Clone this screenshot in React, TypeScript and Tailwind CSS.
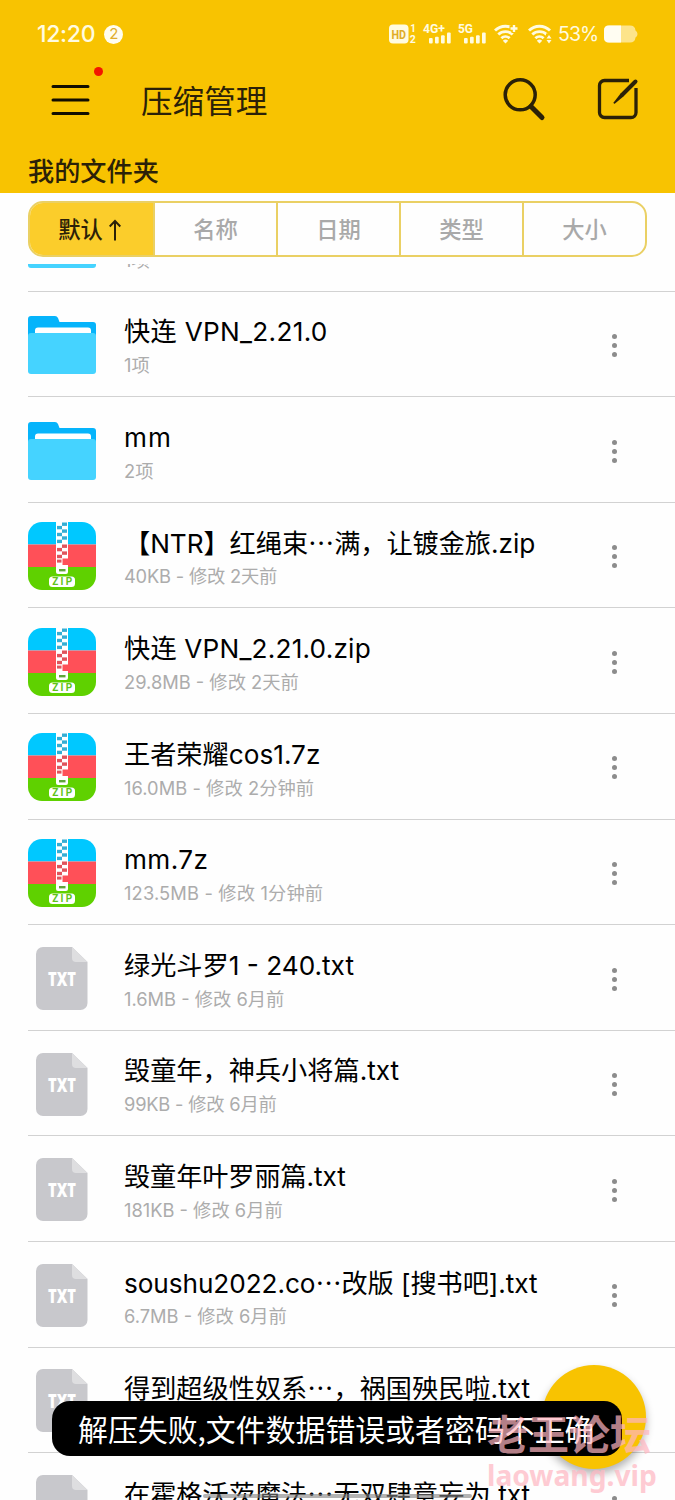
import React from "react";

type FileKind = "folder" | "zip" | "txt";

interface FileItem {
  kind: FileKind;
  name: string;
  info: string;
  nameClass?: string;
  infoClass?: string;
}

const files: FileItem[] = [
  { kind: "folder", name: "", info: "1项" },
  { kind: "folder", name: "快连 VPN_2.21.0", info: "1项", nameClass: "tracking-[0.3px]" },
  { kind: "folder", name: "mm", info: "2项", nameClass: "tracking-[1px]" },
  {
    kind: "zip",
    name: "【NTR】红绳束…满，让镀金旅.zip",
    info: "40KB - 修改 2天前",
    nameClass: "tracking-[-0.05px]",
    infoClass: "tracking-[-0.2px]",
  },
  { kind: "zip", name: "快连 VPN_2.21.0.zip", info: "29.8MB - 修改 2天前", nameClass: "tracking-[0.2px]" },
  { kind: "zip", name: "王者荣耀cos1.7z", info: "16.0MB - 修改 2分钟前", infoClass: "tracking-[0.05px]" },
  {
    kind: "zip",
    name: "mm.7z",
    info: "123.5MB - 修改 1分钟前",
    nameClass: "tracking-[0.4px]",
    infoClass: "tracking-[0.15px]",
  },
  { kind: "txt", name: "绿光斗罗1 - 240.txt", info: "1.6MB - 修改 6月前" },
  { kind: "txt", name: "毁童年，神兵小将篇.txt", info: "99KB - 修改 6月前", infoClass: "tracking-[-0.2px]" },
  { kind: "txt", name: "毁童年叶罗丽篇.txt", info: "181KB - 修改 6月前", nameClass: "tracking-[-0.1px]" },
  { kind: "txt", name: "soushu2022.co…改版 [搜书吧].txt", info: "6.7MB - 修改 6月前", nameClass: "tracking-[-0.08px]" },
  { kind: "txt", name: "得到超级性奴系…，祸国殃民啦.txt", info: "" },
  { kind: "txt", name: "在霍格沃茨魔法…无双肆意妄为.txt", info: "" },
];

const tabs = ["默认", "名称", "日期", "类型", "大小"];

const FolderIcon = () => (
  <svg width="68" height="58" viewBox="0 0 68 58">
    <path d="M0 3a3 3 0 0 1 3-3h24q2 0 3 2l1.500 4H65a3 3 0 0 1 3 3v20H0z" fill="#06b4fb" />
    <path d="M7 18v-3.500a3 3 0 0 1 3-3h50a3 3 0 0 1 3 3V18z" fill="#fff" />
    <path d="M0 20a3 3 0 0 1 3-3h62a3 3 0 0 1 3 3v35a3 3 0 0 1-3 3H3a3 3 0 0 1-3-3z" fill="#45d3ff" />
  </svg>
);

const ZipIcon = () => (
  <svg width="68" height="68" viewBox="0 0 68 68">
    <path d="M0 22.500V14A14 14 0 0 1 14 0h40a14 14 0 0 1 14 14v8.500z" fill="#00c8ff" />
    <path d="M0 22.500h68V45H0z" fill="#ff5058" />
    <path d="M0 45h68v9a14 14 0 0 1-14 14H14A14 14 0 0 1 0 54z" fill="#5fd100" />
    <path d="M28 0h12v46h-12z" fill="#fff" />
    {[0.5, 7.4, 14.3].map((y) => (
      <g key={y} fill="#35aed4">
        <rect x="34" y={y} width="5" height="3.400" />
        <rect x="29" y={y + 3.4} width="5" height="3.400" />
      </g>
    ))}
    {[22.5, 29.4].map((y) => (
      <g key={y} fill="#e0545c">
        <rect x="34" y={y} width="5" height="3.400" />
        <rect x="29" y={y + 3.4} width="5" height="3.400" />
      </g>
    ))}
    <rect x="29" y="37.600" width="4.500" height="3" fill="#e0545c" />
    <rect x="34.500" y="36.500" width="5.500" height="7" fill="#ff5058" />
    <path d="M28 43h12v7a2 2 0 0 1-2 2h-8a2 2 0 0 1-2-2z" fill="#fff" />
    <rect x="31" y="47" width="6.500" height="2.400" fill="#5fa63a" />
    <rect x="21" y="54.500" width="26" height="10.500" rx="3.500" fill="#fff" />
    <text
      x="24.200"
      y="63.300"
      textLength="20"
      fontSize="10"
      fontWeight="700"
      fontFamily="Roboto, sans-serif"
      fill="#5fc31a"
    >
      ZIP
    </text>
  </svg>
);

const TxtIcon = () => (
  <svg width="68" height="63" viewBox="0 0 68 63">
    <path d="M15 0h29l15.500 15v41a7 7 0 0 1-7 7H15a7 7 0 0 1-7-7V7a7 7 0 0 1 7-7z" fill="#c8c8cc" />
    <path d="M44 0l15.500 15H48a4 4 0 0 1-4-4z" fill="#dedee0" />
    <text
      x="20"
      y="38.800"
      textLength="28"
      lengthAdjust="spacingAndGlyphs"
      fontSize="20"
      fontWeight="800"
      fontFamily="'Open Sans', sans-serif"
      fill="#fff"
    >
      TXT
    </text>
  </svg>
);

const icons: Record<FileKind, React.FC> = {
  folder: FolderIcon,
  zip: ZipIcon,
  txt: TxtIcon,
};

const SignalIcon = ({ label }: { label: string }) => (
  <svg className="overflow-visible" width="30" height="20" viewBox="0 0 30 20" fill="#fffbe0">
    <text
      x="0"
      y="9.300"
      fontSize="12"
      fontWeight="700"
      fontFamily="Roboto, sans-serif"
      textLength={label.length > 2 ? 22 : 15}
      lengthAdjust="spacingAndGlyphs"
    >
      {label}
    </text>
    <rect x="6" y="14" width="3.700" height="5.500" rx="1" />
    <rect x="12" y="12.800" width="3.700" height="6.700" rx="1" />
    <rect x="18" y="11.200" width="3.700" height="8.300" rx="1" />
    <rect x="24" y="8.500" width="3.700" height="11" rx="1" />
  </svg>
);

const WifiIcon = ({ plus }: { plus?: boolean }) => (
  <svg width="25" height="20" viewBox="0 0 25 20" fill="none" stroke="#fffbe0" strokeWidth="2.900">
    <path d="M1 6.500a15 15 0 0 1 21 0" />
    <path d="M4.300 10.500a10.500 10.500 0 0 1 14.400 0" />
    <path d="M7.400 14.200a6 6 0 0 1 8.200 0" />
    <path d="M8.800 16.800a3.800 3.800 0 0 1 5.400 0L11.500 19.500z" fill="#fffbe0" stroke="none" />
    {plus ? (
      <path d="M20 0v9M15.500 4.500h9" stroke="#f8c301" strokeWidth="5" />
    ) : (
      <path d="M21 9.500v10" stroke="#f8c301" strokeWidth="6" />
    )}
    {plus ? (
      <path d="M20 1v7M16.500 4.500h7" strokeWidth="2.400" />
    ) : (
      <path d="M21 11l2.500 3.400h-5zM21 19.500l-2.500-3.400h5z" fill="#fffbe0" stroke="none" />
    )}
  </svg>
);

const StatusBar = () => (
  <div className="flex h-[68px] items-center pl-[37px] pr-[37px] text-[#fffbe0]">
    <span className="text-[23px] font-medium tracking-[-0.3px]">12:20</span>
    <span className="ml-[9px] flex size-[19px] items-center justify-center rounded-full bg-[#fffdf0] text-[15px] text-[#e0ad2c]">
      2
    </span>
    <div className="ml-auto flex items-center">
      <svg className="overflow-visible" width="28" height="20" viewBox="0 0 28 20" fill="#fffbe0">
        <rect x="0" y="0.500" width="19.500" height="19" rx="4" />
        <text
          x="2.500"
          y="14.500"
          textLength="14.500"
          lengthAdjust="spacingAndGlyphs"
          fontSize="12.500"
          fontWeight="700"
          fontFamily="Roboto, sans-serif"
          fill="#dfac28"
        >
          HD
        </text>
        <text x="21.300" y="8" fontSize="10" fontWeight="700" fontFamily="Roboto, sans-serif">
          1
        </text>
        <text x="20.800" y="19.300" fontSize="10.500" fontWeight="700" fontFamily="Roboto, sans-serif">
          2
        </text>
      </svg>
      <div className="ml-[6px] flex">
        <SignalIcon label="4G+" />
      </div>
      <div className="ml-[5px] flex">
        <SignalIcon label="5G" />
      </div>
      <div className="ml-[6px] flex">
        <WifiIcon plus />
      </div>
      <div className="ml-[9px] flex">
        <WifiIcon />
      </div>
      <span className="ml-[5px] mt-[2px] w-[39px] text-[19.5px] tracking-[-0.9px]">53%</span>
      <svg className="ml-[7px]" width="34" height="18" viewBox="0 0 34 18">
        <path d="M5 .5h21q5 0 5.500 5 2 1 2 3.500t-2 3.500q-.5 5-5.500 5H5q-5 0-5-5v-7q0-5 5-5z" fill="#fde48a" />
        <path d="M5 .5h12v17H5q-5 0-5-5v-7q0-5 5-5z" fill="#fffdf2" />
      </svg>
    </div>
  </div>
);

const Header = () => (
  <header className="h-[193px] shrink-0 bg-[#f8c301] text-[#2b2108]">
    <StatusBar />
    <div className="flex h-[66px] items-center pl-[51px] pr-[35px]">
      <div className="relative -mt-[3px]">
        <svg width="39" height="34" viewBox="0 0 39 34" stroke="#120d00" strokeWidth="3" strokeLinecap="round">
          <path d="M2 3.500h35M2 17h35M2 30.500h35" />
        </svg>
        <span className="absolute -top-[16px] left-[43px] size-[9px] rounded-full bg-[#f21500]" />
      </div>
      <h1 className="ml-[51px] mt-[2px] text-[31.6px] leading-none">压缩管理</h1>
      <svg className="-mt-[2px] ml-auto" width="46" height="46" viewBox="0 0 46 46" fill="none" stroke="#2b2108">
        <circle cx="19.200" cy="17.800" r="15" strokeWidth="3.500" />
        <path d="M30 29.500L41 40.500" strokeWidth="5" strokeLinecap="round" />
      </svg>
      <svg
        className="-mt-[4px] ml-[49px]"
        width="44"
        height="44"
        viewBox="0 0 44 44"
        fill="none"
        stroke="#2b2108"
        strokeWidth="3.300"
      >
        <path d="M33 3.500H8.500a5 5 0 0 0-5 5v27a5 5 0 0 0 5 5H35a5 5 0 0 0 5-5V11" />
        <path d="M39.500 4.500L26 18" strokeWidth="4" strokeLinecap="round" />
        <path d="M24.600 16.600l2.800 2.800L19 26.500q-1.800.700-1.200-1.200z" fill="#2b2108" stroke="none" />
      </svg>
    </div>
    <h2 className="pl-[28px] pt-[24px] text-[26.2px] font-medium leading-[28px]">我的文件夹</h2>
  </header>
);

const SortTabs = () => (
  <div className="mx-[28px] mt-[8px] grid h-[56px] w-[619px] shrink-0 grid-cols-5 overflow-hidden rounded-[15px] border-2 border-[#ead064] text-[22.3px] font-medium text-[#a9a9a9]">
    {tabs.map((tab, index) => (
      <button
        key={tab}
        className={
          index === 0
            ? "flex items-center justify-center bg-[#fbcd2b] pr-[4px] pt-[2px] text-[#2b2108]"
            : "flex items-center justify-center border-l-2 border-[#ead064] pt-[2px]"
        }
      >
        {tab}
        {index === 0 && (
          <svg
            className="ml-[6px]"
            width="12"
            height="22"
            viewBox="0 0 12 22"
            fill="none"
            stroke="#2b2108"
            strokeWidth="2"
          >
            <path d="M6 21.500V2M.700 7.500L6 2l5.300 5.500" />
          </svg>
        )}
      </button>
    ))}
  </div>
);

const FileRow = ({ item }: { item: FileItem }) => {
  const Icon = icons[item.kind];
  // the ellipsis sits at mid height only in the CJK face
  const [head, tail] = item.name.split("…");
  return (
    <div className="ml-[28px] flex h-[105.6px] items-center border-b border-[#d2d2d2]">
      <div className="mt-[2px]">
        <Icon />
      </div>
      <div className="ml-[28px] flex h-full flex-1 flex-col pt-[23.5px]">
        <span className={`h-[33px] whitespace-nowrap text-[26.2px] leading-[33px] text-black ${item.nameClass ?? ""}`}>
          {head}
          {tail !== undefined && <span className="font-['Noto_Sans_CJK_SC']">…</span>}
          {tail}
        </span>
        <span
          className={`mt-[5px] whitespace-nowrap text-[18.3px] leading-[24px] text-[#acacac] ${item.infoClass ?? ""}`}
        >
          {item.info}
        </span>
      </div>
      <div className="mr-[58px] mt-[3px] flex w-[5px] flex-col gap-[4px]">
        <i className="size-[5px] rounded-full bg-[#8c8c8c]" />
        <i className="size-[5px] rounded-full bg-[#8c8c8c]" />
        <i className="size-[5px] rounded-full bg-[#8c8c8c]" />
      </div>
    </div>
  );
};

const App: React.FC = () => {
  return (
    <div
      lang="zh-CN"
      className="relative flex h-[1500px] w-[675px] flex-col overflow-hidden bg-[#fefefe] font-['Inter','Noto_Sans_CJK_SC',sans-serif]"
    >
      <Header />
      <SortTabs />
      <main className="mt-[7px] flex-1 overflow-hidden">
        <div className="-mt-[77.9px]">
          {files.map((item, index) => (
            <FileRow key={index} item={item} />
          ))}
        </div>
      </main>
      <div className="absolute left-[203px] top-[1494px] h-[4px] w-[269px] rounded-full bg-[#808080]/60" />
      <button className="absolute left-[542px] top-[1365px] size-[104px] rounded-full bg-[#f8c301] shadow-[0_5px_9px_rgba(0,0,0,0.3)]" />
      <div className="absolute left-[52px] top-[1401px] flex h-[55px] w-[570px] items-center whitespace-nowrap rounded-[18px] bg-black pl-[26px] font-['Noto_Sans_CJK_SC'] text-[29.9px] text-white">
        解压失败,文件数据错误或者密码不正确
      </div>
      <div className="absolute left-[487px] top-[1411px] whitespace-nowrap font-bold text-[#ffb6c1] opacity-70">
        <div className="text-[41px] leading-[48px]">老王论坛</div>
        <div className="-mt-[1px] font-['Noto_Sans'] text-[28.2px] leading-[34px]">laowang.vip</div>
      </div>
    </div>
  );
};

export default App;
